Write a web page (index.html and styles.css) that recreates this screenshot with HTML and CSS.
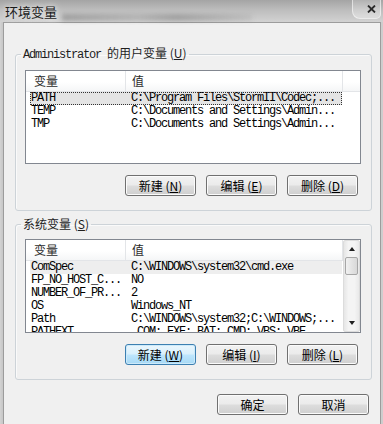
FILE: index.html
```html
<!DOCTYPE html>
<html lang="zh-CN">
<head>
    <meta charset="UTF-8">
    <title>环境变量</title>
    <link rel="stylesheet" href="styles.css">
</head>
<body>
    <div class="window">
        <div class="titlebar">
            <div class="title-ghost"></div>
            <span class="title">环境变量</span>
            <div class="close">
                <svg width="9" height="8" viewBox="0 0 9 8"><path d="M1 0.5 L8 7.5 M8 0.5 L1 7.5" stroke="#2a2a2a" stroke-width="1.8"/></svg>
            </div>
        </div>
        <div class="client">
            <fieldset class="group">
                <legend><span class="mono">Administrator </span>的用户变量 (<u>U</u>)</legend>
                <div class="list">
                    <div class="list-main">
                        <div class="list-head">
                            <div class="hcell c1">变量</div>
                            <div class="hcell c2">值</div>
                            <div class="hcell rest"></div>
                        </div>
                        <div class="row selected focus"><span class="cell c1">PATH</span><span class="cell c2">C:\Program Files\StormII\Codec;...</span></div>
                        <div class="row"><span class="cell c1">TEMP</span><span class="cell c2">C:\Documents and Settings\Admin...</span></div>
                        <div class="row"><span class="cell c1">TMP</span><span class="cell c2">C:\Documents and Settings\Admin...</span></div>
                    </div>
                </div>
                <div class="btn-row">
                    <button class="btn">新建 (<u>N</u>)</button>
                    <button class="btn">编辑 (<u>E</u>)</button>
                    <button class="btn">删除 (<u>D</u>)</button>
                </div>
            </fieldset>

            <fieldset class="group group-sys">
                <legend>系统变量 (<u>S</u>)</legend>
                <div class="list">
                    <div class="list-main">
                        <div class="list-head">
                            <div class="hcell c1">变量</div>
                            <div class="hcell c2">值</div>
                        </div>
                        <div class="row selected"><span class="cell c1">ComSpec</span><span class="cell c2">C:\WINDOWS\system32\cmd.exe</span></div>
                        <div class="row"><span class="cell c1">FP_NO_HOST_C...</span><span class="cell c2">NO</span></div>
                        <div class="row"><span class="cell c1">NUMBER_OF_PR...</span><span class="cell c2">2</span></div>
                        <div class="row"><span class="cell c1">OS</span><span class="cell c2">Windows_NT</span></div>
                        <div class="row"><span class="cell c1">Path</span><span class="cell c2">C:\WINDOWS\system32;C:\WINDOWS;...</span></div>
                        <div class="row"><span class="cell c1">PATHEXT</span><span class="cell c2">.COM;.EXE;.BAT;.CMD;.VBS;.VBE...</span></div>
                    </div>
                    <div class="scrollbar">
                        <div class="sb-btn"><span class="arrow-up"></span></div>
                        <div class="sb-thumb"></div>
                        <div class="sb-track"></div>
                        <div class="sb-btn"><span class="arrow-down"></span></div>
                    </div>
                </div>
                <div class="btn-row">
                    <button class="btn btn-default">新建 (<u>W</u>)</button>
                    <button class="btn">编辑 (<u>I</u>)</button>
                    <button class="btn">删除 (<u>L</u>)</button>
                </div>
            </fieldset>

            <div class="dialog-buttons">
                <button class="btn">确定</button>
                <button class="btn">取消</button>
            </div>
        </div>
    </div>
</body>
</html>
```

FILE: styles.css
```css
* {
    margin: 0;
    padding: 0;
    box-sizing: border-box;
}
body {
    width: 383px;
    height: 424px;
    overflow: hidden;
    background: #cfcfcf;
    font-family: "Noto Sans CJK SC", sans-serif;
    font-size: 12px;
    color: #000;
}
.window {
    width: 383px;
    height: 424px;
    display: flex;
    flex-direction: column;
    background: linear-gradient(90deg, #d4d4d4, #c9c9c9 2px, #cdcdcd);
}

/* title bar, aero glass look */
.titlebar {
    position: relative;
    height: 22px;
    display: flex;
    align-items: flex-start;
    background: linear-gradient(#a4a4a4, #bdbdbd 45%, #d2d2d2);
}
.title-ghost {
    position: absolute;
    left: 62px;
    top: 14px;
    width: 190px;
    height: 7px;
    background: linear-gradient(90deg, rgba(120,120,120,.5), rgba(140,140,140,.35) 40%, rgba(120,120,120,.5) 60%, rgba(150,150,150,.2));
    filter: blur(2px);
}
.title {
    position: relative;
    margin: 3px 0 0 5px;
    font-size: 13px;
    line-height: 17px;
    color: #1a1a1a;
    text-shadow: 0 0 5px #e8e8e8, 0 0 8px #e8e8e8;
}
.close {
    position: relative;
    margin-left: auto;
    margin-right: 2px;
    width: 29px;
    height: 19px;
    display: flex;
    align-items: center;
    justify-content: center;
    padding-left: 9px;
    border: 1px solid rgba(255,255,255,.55);
    border-top: none;
    border-radius: 0 0 5px 8px;
    background: linear-gradient(rgba(255,255,255,.15), rgba(255,255,255,.35));
}

.client {
    flex: 1;
    margin: 0 2px 0 3px;
    border: 1px solid #9c9c9c;
    border-bottom: none;
    background: #f0f0f0;
}

/* group boxes */
.group {
    width: 357px;
    margin: 23px 0 0 11px;
    padding: 0 0 14px 0;
    border: 1px solid #cdd3d8;
    border-radius: 3px;
    box-shadow: inset 1px 1px 0 #fafafa;
}
.group-sys {
    margin-top: 6px;
}
.group legend {
    margin-left: 5px;
    padding: 0 2px;
    line-height: 14px;
    font-size: 12px;
    color: #1e1e1e;
}
.mono {
    font-family: "Liberation Mono", monospace;
    letter-spacing: -1.2px;
}

/* list views */
.list {
    display: flex;
    width: 336px;
    height: 94px;
    margin: 8px 0 0 9px;
    border: 1px solid #828790;
    background: #fff;
    overflow: hidden;
}
.list-main {
    flex: 1;
    overflow: hidden;
}
.list-head {
    display: flex;
    height: 21px;
    border-bottom: 1px solid #e3e5e8;
    background: linear-gradient(#ffffff, #ffffff 55%, #f5f6f7);
    color: #2b2b2b;
}
.hcell {
    line-height: 20px;
    border-right: 1px solid #e3e5e8;
}
.hcell.c1 {
    width: 100px;
    padding-left: 8px;
}
.hcell.c2 {
    width: 217px;
    padding-left: 6px;
}
.hcell.rest {
    flex: 1;
    border-right: none;
}
.row {
    display: flex;
    width: 312px;
    height: 13px;
    margin-left: 4px;
    font-family: "Liberation Mono", monospace;
    font-size: 12px;
    letter-spacing: -1.2px;
    line-height: 13px;
    white-space: nowrap;
    color: #000;
}
.row.selected {
    background: #e4e4e4;
}
.group-sys .row.selected {
    background: #eeeeee;
}
.row.focus {
    outline: 1px dotted #333;
    outline-offset: -1px;
}
.cell.c1 {
    width: 95px;
    padding-left: 1px;
}
.cell.c2 {
    padding-left: 6px;
}

/* vertical scroll bar */
.scrollbar {
    width: 17px;
    display: flex;
    flex-direction: column;
    border: 1px solid #dcdcdc;
    border-radius: 2px;
    background: linear-gradient(90deg, #e6e6e6, #f4f4f4 30%, #f4f4f4 70%, #e9e9e9);
}
.sb-btn {
    height: 16px;
    display: flex;
    align-items: center;
    justify-content: center;
}
.arrow-up {
    border-left: 3.5px solid transparent;
    border-right: 3.5px solid transparent;
    border-bottom: 4px solid #1f1f1f;
}
.arrow-down {
    border-left: 3.5px solid transparent;
    border-right: 3.5px solid transparent;
    border-top: 4px solid #1f1f1f;
}
.sb-thumb {
    height: 18px;
    margin: 0 1px;
    border: 1px solid #a6a6a6;
    border-radius: 2px;
    background: linear-gradient(90deg, #f1f1f1, #e4e4e4 50%, #d8d8d8);
}
.sb-track {
    flex: 1;
}

/* push buttons */
.btn-row {
    display: flex;
    gap: 10px;
    margin-top: 11px;
    padding-left: 109px;
}
.btn {
    width: 71px;
    height: 21px;
    border: 1px solid #707070;
    border-radius: 3px;
    background: linear-gradient(#f2f2f2, #ebebeb 48%, #dddddd 52%, #cfcfcf);
    box-shadow: inset 0 0 0 1px #fbfbfb;
    font-family: "Noto Sans CJK SC", sans-serif;
    font-size: 12px;
    line-height: 18px;
    color: #000;
}
.btn-default {
    border-color: #3c7fb1;
    background: linear-gradient(#eaf6fd, #d9f0fc 48%, #bee6fd 52%, #a7d9f5);
    box-shadow: inset 0 0 0 1px #cdeafa;
}
.btn u {
    text-underline-offset: 1px;
}
.dialog-buttons {
    display: flex;
    justify-content: flex-end;
    gap: 10px;
    margin-top: 14px;
    padding-right: 11px;
}
```
